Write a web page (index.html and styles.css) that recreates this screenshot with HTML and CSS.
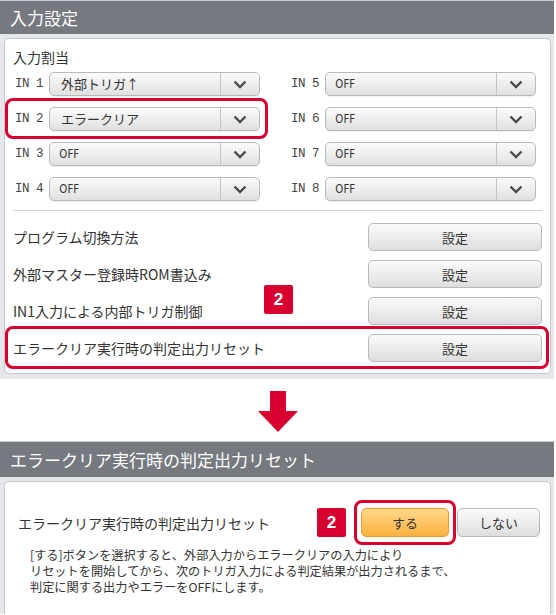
FILE: index.html
```html
<!DOCTYPE html>
<html lang="ja">
<head>
    <meta charset="UTF-8">
    <meta name="viewport" content="width=device-width, initial-scale=1.0">
    <title>入力設定</title>
    <link rel="stylesheet" href="styles.css">
</head>
<body>
    <div class="screen">
        <div class="screen-head">入力設定</div>
        <div class="screen-frame">
            <div class="panel panel-top">
                <div class="section-title">入力割当</div>
                <div class="inputs">
                    <div class="input-col">
                        <div class="input-row">
                            <span class="in-label">IN 1</span>
                            <div class="select"><span class="select-value jp">外部トリガ↑</span><span class="select-btn"><svg width="14" height="9" viewBox="0 0 14 9"><path d="M1.5 1.5 L7 7 L12.5 1.5" fill="none" stroke="#4a4a4a" stroke-width="2.4"/></svg></span></div>
                        </div>
                        <div class="input-row marked">
                            <span class="in-label">IN 2</span>
                            <div class="select"><span class="select-value jp">エラークリア</span><span class="select-btn"><svg width="14" height="9" viewBox="0 0 14 9"><path d="M1.5 1.5 L7 7 L12.5 1.5" fill="none" stroke="#4a4a4a" stroke-width="2.4"/></svg></span></div>
                        </div>
                        <div class="input-row">
                            <span class="in-label">IN 3</span>
                            <div class="select"><span class="select-value">OFF</span><span class="select-btn"><svg width="14" height="9" viewBox="0 0 14 9"><path d="M1.5 1.5 L7 7 L12.5 1.5" fill="none" stroke="#4a4a4a" stroke-width="2.4"/></svg></span></div>
                        </div>
                        <div class="input-row">
                            <span class="in-label">IN 4</span>
                            <div class="select"><span class="select-value">OFF</span><span class="select-btn"><svg width="14" height="9" viewBox="0 0 14 9"><path d="M1.5 1.5 L7 7 L12.5 1.5" fill="none" stroke="#4a4a4a" stroke-width="2.4"/></svg></span></div>
                        </div>
                    </div>
                    <div class="input-col">
                        <div class="input-row">
                            <span class="in-label">IN 5</span>
                            <div class="select"><span class="select-value">OFF</span><span class="select-btn"><svg width="14" height="9" viewBox="0 0 14 9"><path d="M1.5 1.5 L7 7 L12.5 1.5" fill="none" stroke="#4a4a4a" stroke-width="2.4"/></svg></span></div>
                        </div>
                        <div class="input-row">
                            <span class="in-label">IN 6</span>
                            <div class="select"><span class="select-value">OFF</span><span class="select-btn"><svg width="14" height="9" viewBox="0 0 14 9"><path d="M1.5 1.5 L7 7 L12.5 1.5" fill="none" stroke="#4a4a4a" stroke-width="2.4"/></svg></span></div>
                        </div>
                        <div class="input-row">
                            <span class="in-label">IN 7</span>
                            <div class="select"><span class="select-value">OFF</span><span class="select-btn"><svg width="14" height="9" viewBox="0 0 14 9"><path d="M1.5 1.5 L7 7 L12.5 1.5" fill="none" stroke="#4a4a4a" stroke-width="2.4"/></svg></span></div>
                        </div>
                        <div class="input-row">
                            <span class="in-label">IN 8</span>
                            <div class="select"><span class="select-value">OFF</span><span class="select-btn"><svg width="14" height="9" viewBox="0 0 14 9"><path d="M1.5 1.5 L7 7 L12.5 1.5" fill="none" stroke="#4a4a4a" stroke-width="2.4"/></svg></span></div>
                        </div>
                    </div>
                </div>

                <div class="divider"></div>

                <div class="settings">
                    <div class="setting-row">
                        <span class="setting-label">プログラム切換方法</span>
                        <button class="btn btn-set">設定</button>
                    </div>
                    <div class="setting-row">
                        <span class="setting-label">外部マスター登録時ROM書込み</span>
                        <button class="btn btn-set">設定</button>
                    </div>
                    <div class="setting-row">
                        <span class="setting-label">IN1入力による内部トリガ制御</span>
                        <button class="btn btn-set">設定</button>
                    </div>
                    <div class="setting-row marked-wide">
                        <span class="setting-label">エラークリア実行時の判定出力リセット</span>
                        <button class="btn btn-set">設定</button>
                    </div>
                </div>

                <span class="badge badge-float">2</span>
            </div>
        </div>
    </div>

    <div class="arrow">
        <svg width="40" height="41" viewBox="0 0 40 41"><path d="M12 0 H28 V20 H40 L20 41 L0 20 H12 Z" fill="#d7002f"/></svg>
    </div>

    <div class="screen">
        <div class="screen-head screen-head-tall">エラークリア実行時の判定出力リセット</div>
        <div class="screen-frame screen-frame-open">
            <div class="panel panel-bottom">
                <div class="choice-row">
                    <span class="choice-label">エラークリア実行時の判定出力リセット</span>
                    <span class="badge">2</span>
                    <button class="btn btn-yes marked-btn">する</button>
                    <button class="btn btn-no">しない</button>
                </div>
                <p class="note">[する]ボタンを選択すると、外部入力からエラークリアの入力により<br>リセットを開始してから、次のトリガ入力による判定結果が出力されるまで、<br>判定に関する出力やエラーをOFFにします。</p>
            </div>
        </div>
    </div>
</body>
</html>
```

FILE: styles.css
```css
body, html {
    margin: 0;
    padding: 0;
    background: #ffffff;
    color: #333;
    font-family: 'Noto Sans CJK JP', 'Noto Sans', sans-serif;
}
body {
    width: 556px;
    height: 615px;
    overflow: hidden;
}
.screen {
    width: 554px;
}
.screen-head {
    height: 33px;
    border-top: 1px solid #c9cbcf;
    background: #76797f;
    color: #fff;
    font-size: 17px;
    line-height: 33px;
    padding-left: 10px;
}
.screen-head-tall {
    height: 35px;
    line-height: 35px;
}
.screen-frame {
    background: #e5e7ea;
    padding: 4px 3px 5px 4px;
}
.screen-frame-open {
    padding-bottom: 0;
}
.panel {
    position: relative;
    background: #fff;
    border: 1px solid #c4c7cc;
    border-radius: 5px;
}
.panel-top {
    padding: 8px 8px 11px 7px;
}
.section-title {
    font-size: 14px;
    line-height: 20px;
    padding-left: 1px;
}

/* input assignment */
.inputs {
    display: flex;
    gap: 31px;
    margin-top: 5px;
    padding-left: 3px;
}
.input-col {
    display: flex;
    flex-direction: column;
    gap: 11px;
}
.input-row {
    position: relative;
    display: flex;
    align-items: center;
    height: 24px;
}
.in-label {
    width: 34px;
    font-family: 'Liberation Mono', monospace;
    font-size: 12.5px;
    letter-spacing: -0.5px;
    color: #444;
}
.select {
    display: flex;
    width: 209px;
    height: 22px;
    border: 1px solid #b8b9bb;
    border-radius: 5px;
    background: linear-gradient(#fbfbfb, #e0e0e0);
    box-shadow: 0 1px 0 rgba(0,0,0,0.06);
}
.select-value {
    flex: 1;
    padding-left: 11px;
    font-family: 'DejaVu Sans', sans-serif;
    font-size: 12px;
    line-height: 22px;
    color: #333;
    transform: scaleX(0.85);
    transform-origin: left center;
}
.select-value.jp {
    font-family: 'Noto Sans CJK JP', sans-serif;
    font-size: 13px;
    transform: none;
}
.select-btn {
    width: 38px;
    border-left: 1px solid #c4c4c4;
    display: flex;
    align-items: center;
    justify-content: center;
}
.marked::after {
    content: '';
    position: absolute;
    top: -9px;
    bottom: -8px;
    left: -10px;
    right: -8px;
    border: 3px solid #d7002f;
    border-radius: 8px;
}

.divider {
    height: 1px;
    background: #cfd1d4;
    margin: 9px 0 12px 1px;
}

/* settings rows */
.settings {
    display: flex;
    flex-direction: column;
    gap: 9px;
}
.setting-row {
    position: relative;
    display: flex;
    align-items: center;
    justify-content: space-between;
    height: 28px;
}
.setting-label {
    font-size: 14px;
    color: #333;
    padding-left: 1px;
}
.btn {
    height: 28px;
    border: 1px solid #b8b9bb;
    border-radius: 5px;
    background: linear-gradient(#fbfbfb, #dedede);
    font-family: 'Noto Sans CJK JP', sans-serif;
    font-size: 13px;
    color: #333;
    padding: 0;
}
.btn-set {
    width: 174px;
}
.marked-wide::after {
    content: '';
    position: absolute;
    top: -8px;
    bottom: -7px;
    left: -7px;
    right: -7px;
    border: 3px solid #d7002f;
    border-radius: 8px;
}
.badge {
    width: 29px;
    height: 29px;
    border-radius: 2px;
    background: #d7002f;
    color: #fff;
    font-family: 'Liberation Sans', Arial, sans-serif;
    font-weight: bold;
    font-size: 17px;
    line-height: 29px;
    text-align: center;
}
.badge-float {
    position: absolute;
    left: 259px;
    top: 246px;
}

.arrow {
    display: flex;
    justify-content: center;
    padding: 12px 0 9px;
    width: 556px;
}

/* bottom screen */
.panel-bottom {
    box-sizing: border-box;
    height: 133px;
    padding: 26px 10px 0 12px;
    border-bottom: none;
    border-radius: 5px 5px 0 0;
}
.choice-row {
    display: flex;
    align-items: center;
    height: 29px;
}
.choice-label {
    flex: 1;
    font-size: 14px;
    padding-left: 1px;
}
.choice-row .badge {
    margin-right: 15px;
}
.btn-yes {
    position: relative;
    width: 88px;
    height: 29px;
    margin-right: 8px;
    border-color: #e79b36;
    background: linear-gradient(#ffd98a, #fbb040);
}
.btn-no {
    width: 83px;
    height: 29px;
}
.marked-btn::after {
    content: '';
    position: absolute;
    top: -9px;
    bottom: -9px;
    left: -8px;
    right: -8px;
    border: 3px solid #d7002f;
    border-radius: 8px;
}
.note {
    margin: 10px 0 0 13px;
    font-size: 12.2px;
    line-height: 16px;
    color: #333;
}
```
